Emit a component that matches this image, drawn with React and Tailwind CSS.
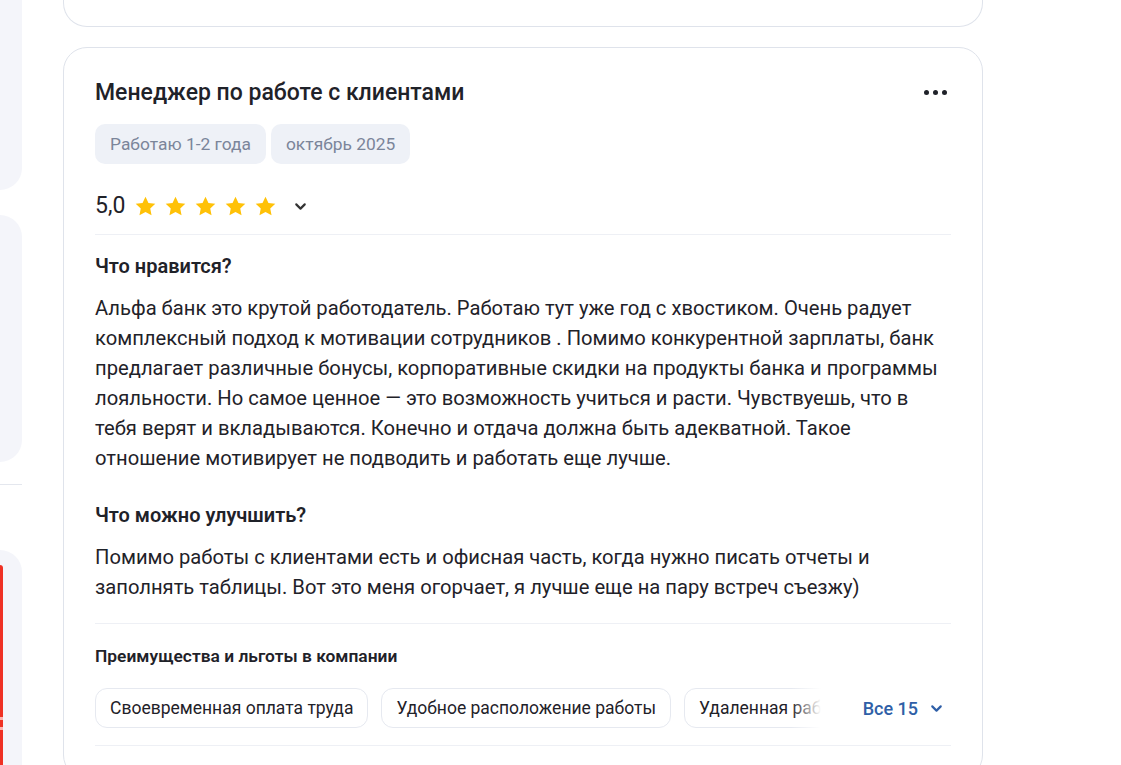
import React from "react";

function Star() {
  return (
    <svg width="25" height="25" viewBox="0 0 24 24" className="shrink-0">
      <path
        d="M12 2.6l2.85 6.05 6.55.8-4.85 4.55 1.25 6.5L12 17.3l-5.8 3.2 1.25-6.5L2.6 9.45l6.55-.8z"
        fill="#FFC107"
      />
    </svg>
  );
}

function Chevron({ color = "#333", size = 16 }) {
  return (
    <svg width={size} height={size} viewBox="0 0 16 16" fill="none">
      <path d="M4 6l4 4 4-4" stroke={color} strokeWidth="2" strokeLinecap="round" strokeLinejoin="round" />
    </svg>
  );
}

export default function App() {
  return (
    <div
      className="w-[1121px] h-[765px] overflow-hidden bg-white flex items-start"
      style={{ fontFamily: "Roboto, 'Noto Sans', sans-serif" }}
    >
      {/* left sidebar remnant */}
      <div className="w-[22px] shrink-0 flex flex-col">
        <div className="shrink-0 h-[190px] bg-[#f4f5fa] rounded-br-[24px]" />
        <div className="shrink-0 mt-[25px] h-[247px] bg-[#f4f5fa] rounded-r-[24px]" />
        <div className="shrink-0 mt-[22px] h-px bg-[#e4e7ee]" />
        <div className="shrink-0 mt-[65px] h-[230px] bg-[#f4f5fa] rounded-tr-[24px] pt-[15px]">
          <div className="w-[3px] h-full bg-[#ef3124] rounded-tr-[6px] relative">
            <div className="absolute left-0 top-[152px] w-[3px] h-[3px] bg-[#ffb3ad]" />
            <div className="absolute left-0 top-[162px] w-[3px] h-[3px] bg-[#ffb3ad]" />
          </div>
        </div>
      </div>

      {/* main column */}
      <div className="ml-[41px] w-[920px] shrink-0 flex flex-col">
        <div className="shrink-0 h-[27px] border border-t-0 border-[#dfe3eb] rounded-b-[24px]" />

        <div className="shrink-0 mt-[20px] border border-[#dfe3eb] rounded-[24px] px-[31px] pt-[31px] pb-8 text-[#1f2229]">
          <div className="flex items-start justify-between">
            <h2 className="text-[23px] leading-[28px] font-medium text-[#1f2229]">
              Менеджер по работе с клиентами
            </h2>
            <div className="flex gap-[4px] mt-[11px] mr-[4px]">
              <span className="w-[5px] h-[5px] rounded-full bg-[#1f2229]" />
              <span className="w-[5px] h-[5px] rounded-full bg-[#1f2229]" />
              <span className="w-[5px] h-[5px] rounded-full bg-[#1f2229]" />
            </div>
          </div>

          <div className="mt-[17px] flex gap-[5px]">
            <span className="h-10 px-[15px] flex items-center rounded-[10px] bg-[#eef1f7] text-[17.4px] text-[#7b859a]">
              Работаю 1-2 года
            </span>
            <span className="h-10 px-[15px] flex items-center rounded-[10px] bg-[#eef1f7] text-[17.4px] text-[#7b859a]">
              октябрь 2025
            </span>
          </div>

          <div className="mt-[26px] h-8 flex items-center">
            <span className="text-[23px] font-normal text-[#1f2229] mr-[8px]">5,0</span>
            <div className="flex gap-[5px]">
              <Star />
              <Star />
              <Star />
              <Star />
              <Star />
            </div>
            <span className="ml-[14px] mt-[1px]">
              <Chevron color="#333" size={17} />
            </span>
          </div>

          <div className="mt-[12px] h-px bg-[#eef0f5]" />

          <h3 className="mt-[19px] text-[20px] leading-6 font-semibold">Что нравится?</h3>
          <p className="mt-[15px] text-[20.2px] leading-[30px]">
            Альфа банк это крутой работодатель. Работаю тут уже год с хвостиком. Очень радует
            <br />
            комплексный подход к мотивации сотрудников . Помимо конкурентной зарплаты, банк
            <br />
            предлагает различные бонусы, корпоративные скидки на продукты банка и программы
            <br />
            лояльности. Но самое ценное — это возможность учиться и расти. Чувствуешь, что в
            <br />
            тебя верят и вкладываются. Конечно и отдача должна быть адекватной. Такое
            <br />
            отношение мотивирует не подводить и работать еще лучше.
          </p>

          <h3 className="mt-[30px] text-[20px] leading-6 font-semibold">Что можно улучшить?</h3>
          <p className="mt-[15px] text-[20.2px] leading-[30px]">
            Помимо работы с клиентами есть и офисная часть, когда нужно писать отчеты и
            <br />
            заполнять таблицы. Вот это меня огорчает, я лучше еще на пару встреч съезжу)
          </p>

          <div className="mt-[21px] h-px bg-[#eef0f5]" />

          <h4 className="mt-[22px] text-[17.4px] leading-5 font-semibold">Преимущества и льготы в компании</h4>

          <div className="mt-[22px] flex items-center">
            <div className="relative w-[726px] overflow-hidden flex gap-[13px]">
              <span className="shrink-0 h-10 px-[14px] flex items-center rounded-[12px] border border-[#e6e9f0] text-[17.5px] text-[#1f2229]">
                Своевременная оплата труда
              </span>
              <span className="shrink-0 h-10 px-[14px] flex items-center rounded-[12px] border border-[#e6e9f0] text-[17.5px] text-[#1f2229]">
                Удобное расположение работы
              </span>
              <span className="shrink-0 h-10 px-[14px] flex items-center rounded-[12px] border border-[#e6e9f0] text-[17.5px] text-[#1f2229]">
                Удаленная работа
              </span>
              <div className="absolute right-0 top-0 h-10 w-[30px] bg-gradient-to-r from-transparent to-white" />
            </div>
            <div className="ml-auto flex items-center gap-[10px] pr-[6px] text-[18px] font-medium text-[#2f5fa7]">
              <span>Все 15</span>
              <Chevron color="#2f5fa7" size={17} />
            </div>
          </div>

          <div className="mt-[17px] h-px bg-[#eef0f5]" />
        </div>
      </div>
    </div>
  );
}
